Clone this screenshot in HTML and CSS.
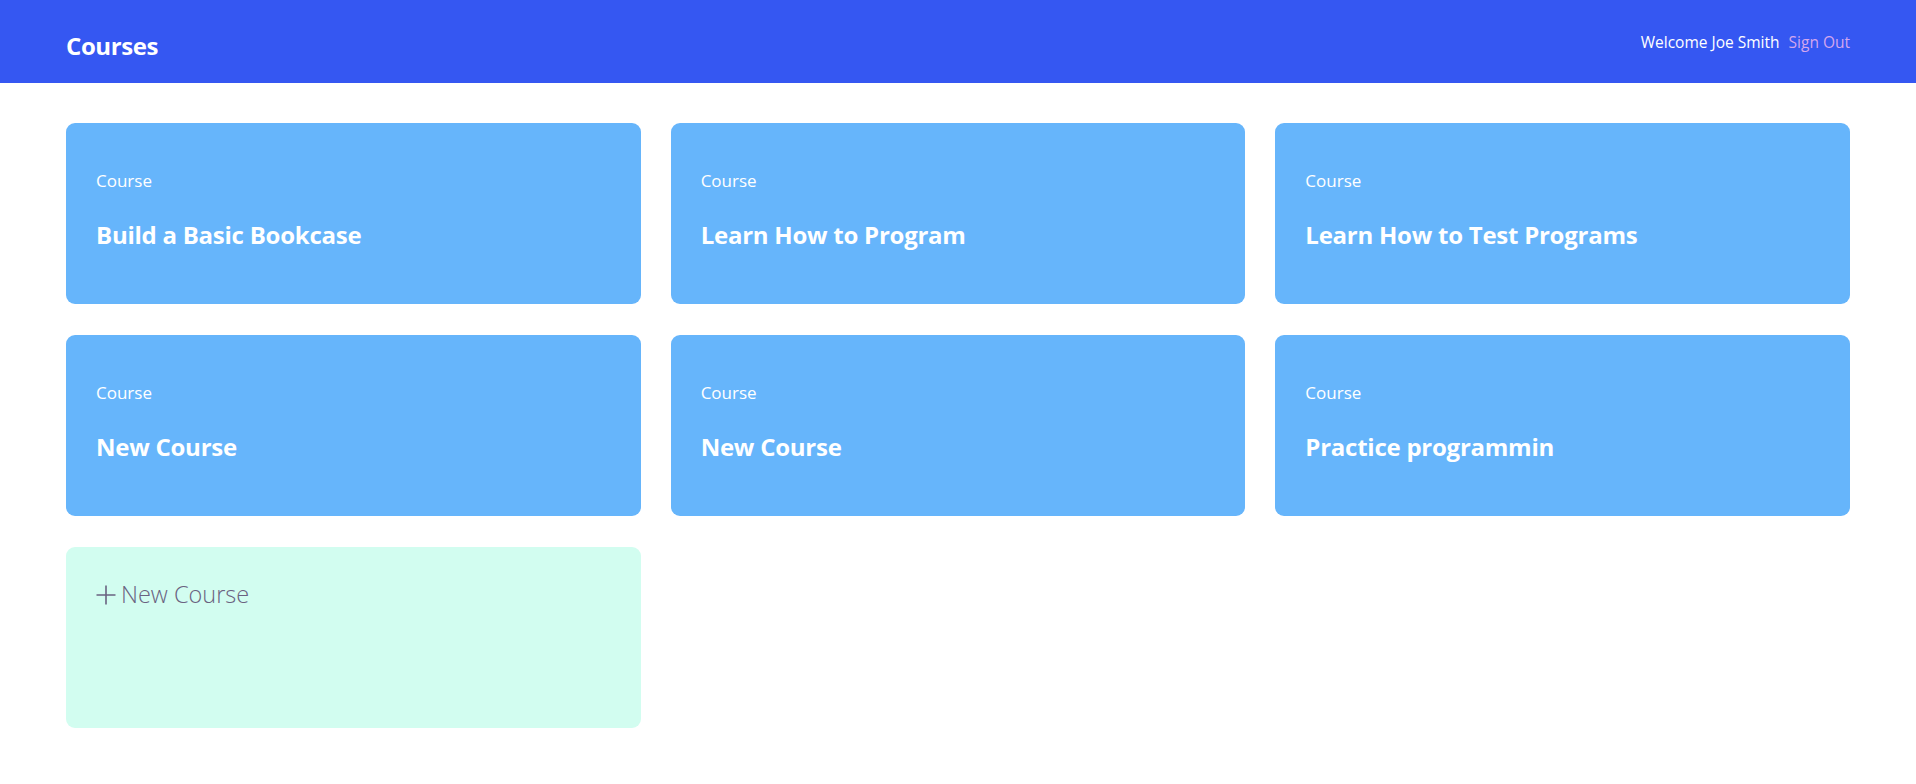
FILE: index.html
```html
<!DOCTYPE html>
<html lang="en">
<head>
<meta charset="utf-8">
<title>Courses</title>
<link rel="stylesheet" href="styles.css">
</head>
<body>
<header class="topbar">
  <h1 class="brand">Courses</h1>
  <nav class="user">
    <span class="welcome">Welcome Joe Smith</span>
    <a class="signout" href="#">Sign Out</a>
  </nav>
</header>
<main class="grid">
  <a class="card" href="#"><span class="label">Course</span><span class="title">Build a Basic Bookcase</span></a>
  <a class="card" href="#"><span class="label">Course</span><span class="title">Learn How to Program</span></a>
  <a class="card" href="#"><span class="label">Course</span><span class="title">Learn How to Test Programs</span></a>
  <a class="card" href="#"><span class="label">Course</span><span class="title">New Course</span></a>
  <a class="card" href="#"><span class="label">Course</span><span class="title">New Course</span></a>
  <a class="card" href="#"><span class="label">Course</span><span class="title">Practice programmin</span></a>
  <a class="card card-new" href="#">
    <span class="new-label"><svg class="plus" viewBox="0 0 20 20" width="20" height="20" aria-hidden="true"><path d="M10 0.5V19.5M0.5 10H19.5" stroke="currentColor" stroke-width="1.6" fill="none"/></svg>New Course</span>
  </a>
</main>
</body>
</html>
```
FILE: styles.css
```css
* { box-sizing: border-box; }
html, body { margin: 0; padding: 0; }
body {
  font-family: "Open Sans", "Noto Sans", sans-serif;
  background: #ffffff;
  color: #ffffff;
}
.topbar {
  height: 83px;
  background: #3557f2;
  display: flex;
  justify-content: space-between;
  align-items: flex-start;
  padding: 30px 66px 0;
}
.brand {
  margin: 0;
  font-size: 24px;
  line-height: 32px;
  font-weight: 700;
  letter-spacing: -0.4px;
}
.user {
  margin-top: 0;
  display: flex;
  gap: 9px;
  font-size: 15.5px;
  line-height: 24px;
}
.welcome { color: #ffffff; }
.signout { color: #d3a6ee; text-decoration: none; }
.grid {
  display: grid;
  grid-template-columns: repeat(3, 1fr);
  grid-auto-rows: 181px;
  column-gap: 30px;
  row-gap: 31px;
  padding: 40px 66px;
}
.card {
  display: flex;
  flex-direction: column;
  background: #66b5fb;
  border-radius: 9px;
  padding: 46px 30px 0;
  color: #ffffff;
  text-decoration: none;
}
.label {
  font-size: 17px;
  line-height: 24px;
  font-weight: 400;
}
.title {
  margin-top: 26px;
  font-size: 24px;
  line-height: 32px;
  font-weight: 700;
  letter-spacing: -0.25px;
}
.card-new {
  background: #d2fdf0;
  padding-top: 29px;
}
.new-label {
  display: flex;
  align-items: center;
  gap: 5px;
  font-size: 23.5px;
  line-height: 36px;
  font-weight: 300;
  color: #6a6280;
}
.plus { width: 20px; height: 20px; color: #6a6280; margin-top: 2px; }
```
